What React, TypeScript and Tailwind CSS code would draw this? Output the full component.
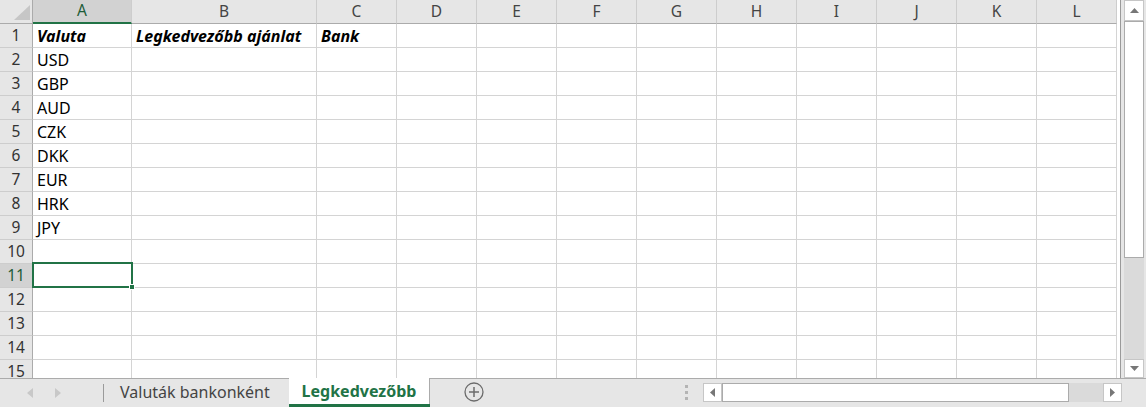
import React from "react";

const cols = ["A", "B", "C", "D", "E", "F", "G", "H", "I", "J", "K", "L"];
const colA: Record<number, string> = {
  2: "USD",
  3: "GBP",
  4: "AUD",
  5: "CZK",
  6: "DKK",
  7: "EUR",
  8: "HRK",
  9: "JPY",
};

function Cell({ r, c }: { r: number; c: number }) {
  let content: React.ReactNode = null;
  if (r === 1) {
    if (c === 0) content = "Valuta";
    if (c === 1) content = "Legkedvezőbb ajánlat";
    if (c === 2) content = "Bank";
  } else if (c === 0 && colA[r]) {
    content = colA[r];
  }
  return (
    <div
      className={
        "h-[24px] border-r border-b border-[#d4d4d4] flex items-center pl-[4px] pt-[1px] text-[16px] text-black whitespace-nowrap overflow-visible " +
        (r === 1 ? "font-bold italic" : "")
      }
    >
      {content}
    </div>
  );
}

export default function App() {
  const rows = Array.from({ length: 15 }, (_, i) => i + 1);
  return (
    <div
      className="w-[1146px] h-[407px] overflow-hidden bg-[#e6e6e6] flex flex-col select-none"
      style={{ fontFamily: '"Noto Sans", "Open Sans", sans-serif' }}
    >
      <div className="flex h-[378px]">
        {/* grid */}
        <div className="relative w-[1121px] h-[378px] overflow-hidden bg-white border-r border-[#9a9a9a]">
          <div className="grid grid-cols-[33px_99px_185px_repeat(10,80px)]">
            {/* corner */}
            <div className="h-[24px] bg-[#e6e6e6] border-r border-b border-[#ababab] relative">
              <svg className="absolute left-[14px] top-[5px]" width="16" height="15" viewBox="0 0 16 15">
                <polygon points="16,0 16,15 0,15" fill="#c6c6c6" />
              </svg>
            </div>
            {cols.map((c, i) => (
              <div
                key={c}
                className={
                  "h-[24px] flex items-center justify-center text-[15.5px] border-r border-r-[#cdcdcd] " +
                  (i === 0
                    ? "bg-[#d2d2d2] border-b-2 border-b-[#217346] text-[#1d5c38]"
                    : "bg-[#e6e6e6] border-b border-b-[#ababab] text-[#444]")
                }
              >
                {c}
              </div>
            ))}
            {rows.map((r) => (
              <React.Fragment key={r}>
                <div
                  className={
                    "h-[24px] flex items-center justify-center text-[15.5px] border-r border-r-[#ababab] border-b border-b-[#cdcdcd] " +
                    (r === 11 ? "bg-[#d2d2d2] text-[#1d5c38]" : "bg-[#e6e6e6] text-[#333]")
                  }
                >
                  {r}
                </div>
                {cols.map((c, ci) => (
                  <Cell key={c} r={r} c={ci} />
                ))}
              </React.Fragment>
            ))}
          </div>
          {/* selection */}
          <div className="absolute left-[32px] top-[262px] w-[101px] h-[26px] border-2 border-[#217346]" />
          <div className="absolute left-[129px] top-[284px] w-[6px] h-[6px] bg-[#217346] border border-white" />
        </div>
        {/* vertical scrollbar */}
        <div className="w-[25px] h-[378px] pl-[3px] pr-[2px] flex flex-col">
          <div className="h-[21px] bg-white border border-[#c6c6c6] flex items-center justify-center">
            <svg width="9" height="5" viewBox="0 0 9 5">
              <polygon points="0,5 9,5 4.5,0" fill="#777" />
            </svg>
          </div>
          <div className="h-[237px] bg-white border border-[#ababab]" />
          <div className="flex-1 bg-[#dadada]" />
          <div className="h-[19px] bg-white border border-[#c6c6c6] flex items-center justify-center">
            <svg width="9" height="5" viewBox="0 0 9 5">
              <polygon points="0,0 9,0 4.5,5" fill="#777" />
            </svg>
          </div>
        </div>
      </div>
      {/* sheet tab bar */}
      <div className="h-[29px] flex items-stretch border-t border-[#ababab] relative">
        <div className="w-[103px] flex items-center">
          <svg className="ml-[27px]" width="6" height="10" viewBox="0 0 6 10">
            <polygon points="6,0 6,10 0,5" fill="#c8c8c8" />
          </svg>
          <svg className="ml-[22px]" width="6" height="10" viewBox="0 0 6 10">
            <polygon points="0,0 0,10 6,5" fill="#c8c8c8" />
          </svg>
        </div>
        <div className="w-px my-[5px] bg-[#9a9a9a]" />
        <div className="w-[185px] flex items-center pl-[16px] pb-[3px] text-[16px] text-[#444] whitespace-nowrap">
          Valuták bankonként
        </div>
        <div className="-mt-px w-[141px] bg-white border-r border-[#ababab] mb-[3px] relative flex items-center justify-center pb-[1px] text-[16px] font-bold text-[#217346]">
          Legkedvezőbb
          <div className="absolute left-0 right-[-1px] bottom-[-3px] h-[3px] bg-[#217346]" />
        </div>
        <div className="w-[88px] flex items-center justify-center pb-[2px]">
          <svg width="20" height="20" viewBox="0 0 20 20">
            <circle cx="10" cy="10" r="9" fill="none" stroke="#6b6b6b" strokeWidth="1.3" />
            <line x1="10" y1="5" x2="10" y2="15" stroke="#6b6b6b" strokeWidth="1.5" />
            <line x1="5" y1="10" x2="15" y2="10" stroke="#6b6b6b" strokeWidth="1.5" />
          </svg>
        </div>
        <div className="w-[185px] flex items-center">
          <div className="ml-[167px] flex flex-col gap-[3px] pb-[2px]">
            <div className="w-[3px] h-[3px] bg-[#b4b4b4]" />
            <div className="w-[3px] h-[3px] bg-[#b4b4b4]" />
            <div className="w-[3px] h-[3px] bg-[#b4b4b4]" />
          </div>
        </div>
        {/* horizontal scrollbar */}
        <div className="w-[419px] h-[19px] mt-[4px] flex">
          <div className="w-[19px] h-[19px] bg-white border border-[#c6c6c6] flex items-center justify-center">
            <svg width="5" height="9" viewBox="0 0 5 9">
              <polygon points="5,0 5,9 0,4.5" fill="#777" />
            </svg>
          </div>
          <div className="w-[347px] h-[19px] bg-white border border-[#ababab]" />
          <div className="w-[34px] h-[19px] bg-[#dadada]" />
          <div className="w-[19px] h-[19px] bg-white border border-[#c6c6c6] flex items-center justify-center">
            <svg width="5" height="9" viewBox="0 0 5 9">
              <polygon points="0,0 0,9 5,4.5" fill="#777" />
            </svg>
          </div>
        </div>
      </div>
    </div>
  );
}
